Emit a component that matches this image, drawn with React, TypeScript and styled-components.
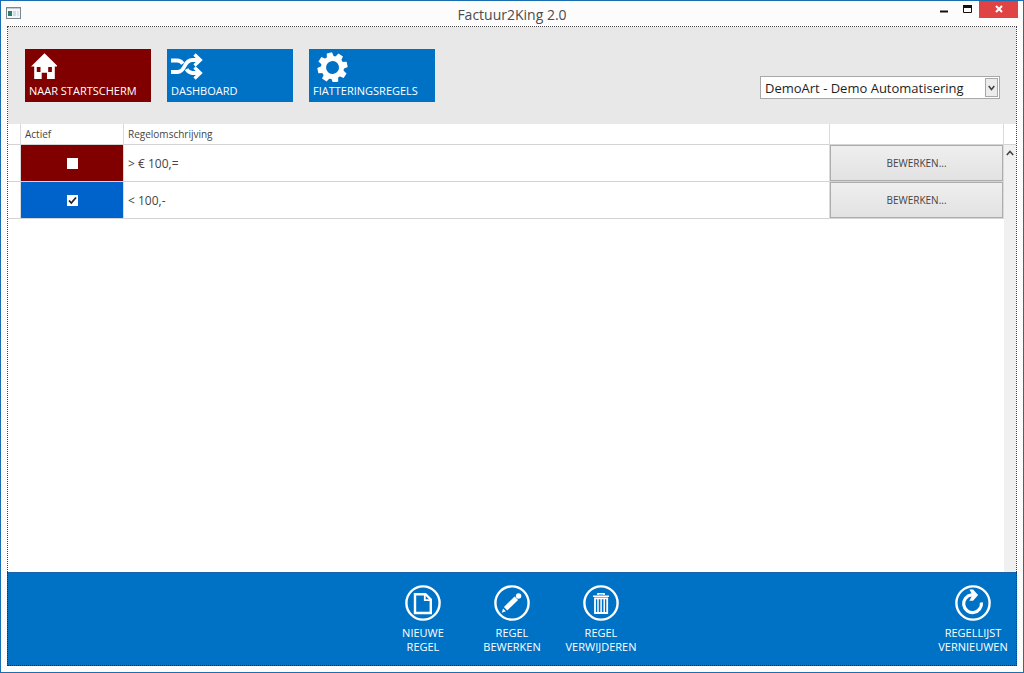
import React from "react";
import styled, { createGlobalStyle } from "styled-components";

const GlobalStyle = createGlobalStyle`
  * { box-sizing: border-box; }
  body {
    margin: 0;
    font-family: "Open Sans", "Noto Sans", sans-serif;
    font-size: 12px;
    color: #444;
    background: #fff;
  }
  button, select { font-family: inherit; }
`;

const accent = "#0072c6";
const maroon = "#800000";

const Window = styled.div`
  display: flex;
  flex-direction: column;
  min-height: 100vh;
  border: 1px solid #1b6fb0;
  background: #fcfcfc;
`;

const TitleBar = styled.header`
  display: grid;
  grid-template-columns: 1fr auto 1fr;
  height: 25px;
  padding: 0 5px;
`;

const AppIcon = styled.svg`
  display: block;
  margin-top: 6px;
`;

const Title = styled.h1`
  margin: 0;
  font-size: 14px;
  font-weight: 400;
  line-height: 27px;
  color: #4c4c4c;
`;

const WindowControls = styled.div`
  display: flex;
  justify-content: flex-end;
  align-items: flex-start;
`;

const ControlButton = styled.button<{ $width: number; $danger?: boolean }>`
  width: ${(p) => p.$width}px;
  height: 17px;
  padding: 0;
  border: 0;
  background: ${(p) => (p.$danger ? "#e04343" : "transparent")};
  svg { display: block; margin: 0 auto; }
`;

const Client = styled.main`
  flex: 1;
  display: flex;
  flex-direction: column;
  margin: 0 6px 6px;
  border: 1px dotted #444;
  background: #fff;
`;

const Toolbar = styled.section`
  display: flex;
  justify-content: space-between;
  align-items: flex-start;
  height: 97px;
  padding: 22px 16px 0 17px;
  background: #e8e8e8;
`;

const Tiles = styled.nav`
  display: flex;
  gap: 16px;
`;

const Tile = styled.button<{ $color: string }>`
  display: flex;
  flex-direction: column;
  justify-content: space-between;
  align-items: flex-start;
  width: 126px;
  height: 53px;
  padding: 3px 4px 4px;
  border: 0;
  background: ${(p) => p.$color};
  color: #fff;
  font-size: 11px;
  line-height: 15px;
  white-space: nowrap;
  svg { display: block; }
`;

const SelectBox = styled.label`
  position: relative;
  display: block;
  width: 240px;
  height: 23px;
  margin-top: 27px;
`;

const Select = styled.select`
  appearance: none;
  display: block;
  width: 100%;
  height: 100%;
  padding: 0 20px 0 4px;
  border: 1px solid #a8a8a8;
  border-radius: 0;
  background: #fff;
  color: #1e1e1e;
  font-size: 13px;
`;

const SelectArrow = styled.span`
  position: absolute;
  top: 2px;
  right: 2px;
  display: grid;
  place-items: center;
  width: 13px;
  height: 19px;
  border: 1px solid #a8a8a8;
  background: #ececec;
  pointer-events: none;
`;

const GridArea = styled.section`
  flex: 1;
  display: flex;
`;

const GridMain = styled.div`
  flex: 1;
  min-width: 0;
`;

const Table = styled.table`
  width: 100%;
  table-layout: fixed;
  border-collapse: separate;
  border-spacing: 0;
`;

const HeadCell = styled.th<{ $width?: number }>`
  width: ${(p) => (p.$width ? `${p.$width}px` : "auto")};
  height: 21px;
  padding: 1px 4px 0;
  border-right: 1px solid #dadada;
  border-bottom: 1px solid #d4d4d4;
  font-size: 10px;
  font-weight: 400;
  line-height: 15px;
  text-align: left;
`;

const Cell = styled.td`
  height: 36px;
  padding: 0 4px;
  border-right: 1px solid #dadada;
  border-bottom: 1px solid #d4d4d4;
`;

const PlainCell = styled(Cell)`
  padding: 0;
`;

const ActiveCell = styled(Cell)<{ $active: boolean }>`
  padding: 0;
  text-align: center;
  background: ${(p) => (p.$active ? "#0063cc" : maroon)};
  background-clip: padding-box;
`;

const Check = styled.input`
  appearance: none;
  display: block;
  width: 11px;
  height: 11px;
  margin: 0 auto;
  background: #fff;
  &:checked {
    background: #fff
      url("data:image/svg+xml,%3Csvg xmlns='http://www.w3.org/2000/svg' viewBox='0 0 11 11'%3E%3Cpath d='M2 5.5 4.3 8 9 2.5' fill='none' stroke='%23222' stroke-width='1.8'/%3E%3C/svg%3E");
  }
`;

const EditButton = styled.button`
  display: block;
  width: 100%;
  height: 36px;
  padding: 0;
  border: 1px solid #adadad;
  background: linear-gradient(#efefef, #e2e2e2);
  color: #444;
  font-size: 10px;
`;

const ScrollColumn = styled.div`
  display: flex;
  flex-direction: column;
  width: 12px;
`;

const ScrollCorner = styled.div`
  height: 21px;
  border-bottom: 1px solid #d4d4d4;
`;

const ScrollTrack = styled.div`
  flex: 1;
  background: #f0f0f0;
`;

const ScrollButton = styled.button`
  display: block;
  width: 12px;
  height: 17px;
  padding: 0;
  border: 0;
  background: transparent;
  svg { display: block; margin: 0 auto; }
`;

const ActionBar = styled.footer`
  display: grid;
  grid-template-columns: 1fr auto 1fr;
  min-height: 94px;
  margin: 0 -1px -1px;
  padding-top: 12px;
  border: 1px dotted #0b3358;
  border-top: 1px solid #1a63a8;
  background: ${accent};
`;

const ActionGroup = styled.div`
  grid-column: 2;
  display: flex;
  gap: 3px;
`;

const EndGroup = styled.div`
  display: flex;
  justify-content: flex-end;
`;

const ActionButton = styled.button`
  display: flex;
  flex-direction: column;
  align-items: center;
  gap: 5px;
  width: 86px;
  height: 72px;
  padding: 0;
  border: 0;
  background: transparent;
  color: #fff;
  font-size: 11px;
  line-height: 14px;
  svg { display: block; }
`;

const HomeIcon = () => (
  <svg width="28" height="28" viewBox="0 0 28 28" fill="#fff" aria-hidden="true">
    <path
      fillRule="evenodd"
      d="M15.5 1.2 29 14.6h-3.2V27H18v-6.2h-5.3V27H5.2V14.6H2ZM7.8 15v5h3.7v-5ZM19.2 15v5h3.7v-5Z"
    />
  </svg>
);

const ShuffleIcon = () => (
  <svg width="32" height="28" viewBox="0 0 32 28" fill="none" stroke="#fff" aria-hidden="true">
    <path d="M0 20h6.500c4 0 5.500-2.500 7.200-6S17.500 8 21.500 8H29" strokeWidth="3.800" />
    <path d="M0 8.500h6c3 0 4.500 1.200 5.800 3.300M15.500 17.200c1.300 2.400 2.900 3.800 6 3.800H29" strokeWidth="3.800" />
    <path d="M23.500 2.500 29.300 8.100 23.500 13.500M23.500 15.500 29.300 21.100 23.500 26.500" strokeWidth="3.300" />
  </svg>
);

const GearIcon = () => (
  <svg width="38" height="30" viewBox="0 0 38 30" aria-hidden="true">
    <g transform="translate(19.5 15.5) rotate(-12)">
      {[0, 45, 90, 135, 180, 225, 270, 315].map((angle) => (
        <path key={angle} d="M-3.6-10-2.7-15h5.4L3.6-10Z" transform={`rotate(${angle})`} fill="#fff" />
      ))}
      <circle r="9" fill="none" stroke="#fff" strokeWidth="5" />
    </g>
  </svg>
);

const Ring = ({ children }: { children: React.ReactNode }) => (
  <svg width="36" height="36" viewBox="0 0 36 36" fill="none" stroke="#fff" aria-hidden="true">
    <circle cx="18" cy="18" r="16.6" strokeWidth="2.4" />
    {children}
  </svg>
);

const NewIcon = () => (
  <Ring>
    <path d="M10 9.2h10.5l5.3 5.3V28H10Z" strokeWidth="2.4" />
    <path d="M19.8 9v6.2H26" strokeWidth="1.8" />
  </Ring>
);

const PencilIcon = () => (
  <Ring>
    <g fill="#fff" stroke="none">
      <path d="m20.6 11.600 3.500 3.400L13.200 25.400 9.900 22Z" />
      <path d="m9 23.400 2.900 2.900-4.100 1.500Z" />
      <circle cx="24.600" cy="11" r="2.700" />
    </g>
  </Ring>
);

const TrashIcon = () => (
  <Ring>
    <path d="M10 11.2h16M15 10V8.8h6V10" strokeWidth="1.6" />
    <path d="M12 13.4h12.2V28H12Z" strokeWidth="1.8" />
    <path d="M15 14v13.5M18.1 14v13.5M21.2 14v13.5" strokeWidth="1.5" />
  </Ring>
);

const RefreshIcon = () => (
  <Ring>
    <path d="M26.4 17.5A8.900 8.900 0 1 1 16.500 9.800h2" strokeWidth="3.2" />
    <path d="M14.4 4.400h3.700l5 5.600-5 5.800h-3.700l3-5.800Z" fill="#fff" stroke="none" />
  </Ring>
);

const tiles = [
  { label: "NAAR STARTSCHERM", color: maroon, icon: <HomeIcon /> },
  { label: "DASHBOARD", color: accent, icon: <ShuffleIcon /> },
  { label: "FIATTERINGSREGELS", color: accent, icon: <GearIcon /> },
];

const rules = [
  { description: "> € 100,=", active: false },
  { description: "< 100,-", active: true },
];

const actions = [
  { lines: ["NIEUWE", "REGEL"], icon: <NewIcon /> },
  { lines: ["REGEL", "BEWERKEN"], icon: <PencilIcon /> },
  { lines: ["REGEL", "VERWIJDEREN"], icon: <TrashIcon /> },
];

const Action = ({ lines, icon }: { lines: string[]; icon: React.ReactNode }) => (
  <ActionButton type="button">
    {icon}
    <span>
      {lines[0]}
      <br />
      {lines[1]}
    </span>
  </ActionButton>
);

export default function App() {
  return (
    <>
      <GlobalStyle />
      <Window>
        <TitleBar>
          <AppIcon width="15" height="12" viewBox="0 0 15 12" aria-hidden="true">
            <rect x="0.5" y="0.5" width="14" height="11" fill="#f4f6f8" stroke="#7d8790" />
            <path d="M1 1.5h13" stroke="#c3cbd3" />
            <rect x="2" y="4" width="4" height="5" fill="#2e7d68" />
            <rect x="7" y="4" width="3" height="5" fill="#cfdcea" />
            <rect x="11" y="4" width="2" height="5" fill="#dfe5eb" />
          </AppIcon>
          <Title>Factuur2King 2.0</Title>
          <WindowControls>
            <ControlButton type="button" $width={24} aria-label="Minimaliseren">
              <svg width="9" height="17" viewBox="0 0 9 17">
                <path d="M1 10.5h8" stroke="#111" strokeWidth="2" />
              </svg>
            </ControlButton>
            <ControlButton type="button" $width={24} aria-label="Maximaliseren">
              <svg width="9" height="17" viewBox="0 0 9 17">
                <path d="M.5 5v6.5h8V5" fill="none" stroke="#111" />
                <path d="M0 5.5h9" stroke="#111" strokeWidth="3" />
              </svg>
            </ControlButton>
            <ControlButton type="button" $width={39} $danger aria-label="Sluiten">
              <svg width="8" height="17" viewBox="0 0 8 17">
                <path d="m1 5 6 6M7 5l-6 6" stroke="#fff" strokeWidth="2" />
              </svg>
            </ControlButton>
          </WindowControls>
        </TitleBar>
        <Client>
          <Toolbar>
            <Tiles>
              {tiles.map((tile) => (
                <Tile key={tile.label} type="button" $color={tile.color}>
                  {tile.icon}
                  {tile.label}
                </Tile>
              ))}
            </Tiles>
            <SelectBox>
              <Select aria-label="Administratie">
                <option>DemoArt - Demo Automatisering</option>
              </Select>
              <SelectArrow>
                <svg width="7" height="6" viewBox="0 0 7 6" aria-hidden="true">
                  <path d="M.7 1 3.5 4.4 6.3 1" fill="none" stroke="#444" strokeWidth="1.6" />
                </svg>
              </SelectArrow>
            </SelectBox>
          </Toolbar>
          <GridArea>
            <GridMain>
              <Table>
                <thead>
                  <tr>
                    <HeadCell $width={13} />
                    <HeadCell $width={103}>Actief</HeadCell>
                    <HeadCell>Regelomschrijving</HeadCell>
                    <HeadCell $width={174} />
                  </tr>
                </thead>
                <tbody>
                  {rules.map((rule) => (
                    <tr key={rule.description}>
                      <PlainCell />
                      <ActiveCell $active={rule.active}>
                        <Check type="checkbox" defaultChecked={rule.active} aria-label={`Actief: ${rule.description}`} />
                      </ActiveCell>
                      <Cell>{rule.description}</Cell>
                      <PlainCell>
                        <EditButton type="button">BEWERKEN...</EditButton>
                      </PlainCell>
                    </tr>
                  ))}
                </tbody>
              </Table>
            </GridMain>
            <ScrollColumn>
              <ScrollCorner />
              <ScrollTrack>
                <ScrollButton type="button" aria-label="Omhoog schuiven">
                  <svg width="8" height="15" viewBox="0 0 8 15" aria-hidden="true">
                    <path d="M.8 9 4 5.400 7.2 9" fill="none" stroke="#444" strokeWidth="1.6" />
                  </svg>
                </ScrollButton>
              </ScrollTrack>
            </ScrollColumn>
          </GridArea>
          <ActionBar>
            <ActionGroup>
              {actions.map((action) => (
                <Action key={action.lines.join(" ")} {...action} />
              ))}
            </ActionGroup>
            <EndGroup>
              <Action lines={["REGELLIJST", "VERNIEUWEN"]} icon={<RefreshIcon />} />
            </EndGroup>
          </ActionBar>
        </Client>
      </Window>
    </>
  );
}
